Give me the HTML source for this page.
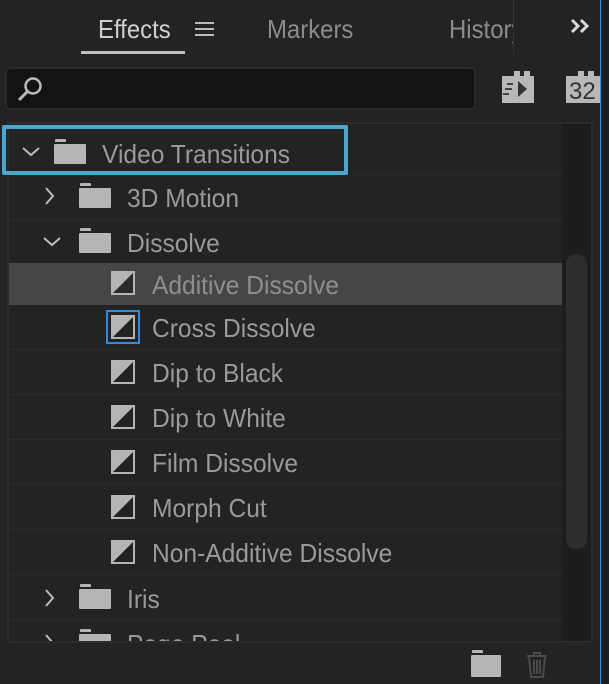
<!DOCTYPE html>
<html><head><meta charset="utf-8"><style>
*{margin:0;padding:0;box-sizing:border-box}
body{width:609px;height:684px;background:#232323;position:relative;overflow:hidden;font-family:"Liberation Sans",sans-serif}
.a{position:absolute}
.tab{position:absolute;top:14px;font-size:26px;color:#8c8c8c;transform:scaleX(.92);transform-origin:left}
.row{position:absolute;left:9px;width:553px;height:45px;border-bottom:1px solid #2b2b2b}
.lbl{position:absolute;font-size:26px;color:#9a9a9a;top:8px;transform:scaleX(.945);transform-origin:left}
.fold{position:absolute;width:32px;height:20px;background:#b5b5b5;border-radius:1px}
.fold:before{content:"";position:absolute;left:1px;top:-5px;width:11px;height:3px;background:#b5b5b5;border-radius:1px 1px 0 0}
.tr{position:absolute;left:101px;top:9px;width:26px;height:26px}
</style></head><body>
<div class="tab" style="left:98px;color:#cfcfcf">Effects</div>
<div class="a" style="left:195px;top:22px;width:19px;height:2px;background:#bbb;box-shadow:0 6px 0 #bbb,0 12px 0 #bbb"></div>
<div class="a" style="left:81px;top:51px;width:104px;height:3px;background:#c0c0c0"></div>
<div class="tab" style="left:267px">Markers</div>
<div class="a" style="left:449px;top:0;width:64px;height:55px;overflow:hidden"><div class="tab" style="left:0">History</div></div>
<div class="a" style="left:513px;top:0;width:1px;height:55px;background:#333"></div>
<svg class="a" style="left:569px;top:17px" width="24" height="18"><path d="M3 3l6 6-6 6M12 3l6 6-6 6" stroke="#d8d8d8" stroke-width="3" fill="none"/></svg>
<div class="a" style="left:600px;top:0;width:1px;height:684px;background:#2d8ce6"></div>
<div class="a" style="left:601px;top:0;width:8px;height:684px;background:#1e1e1e"></div>
<div class="a" style="left:5px;top:67px;width:471px;height:43px;background:#131313;border:2px solid #2a2a2a;border-radius:5px"></div>
<svg class="a" style="left:15px;top:75px" width="30" height="28"><circle cx="18" cy="11" r="7.5" stroke="#bbb" stroke-width="2.5" fill="none"/><path d="M13 16L4 25" stroke="#bbb" stroke-width="3"/></svg>
<svg class="a" style="left:502px;top:71px" width="36" height="32"><path d="M0 5h12V0h6v5h4V0h6v5h4v27H0z" fill="#b8b8b8"/><path d="M16 10l9 8-9 8z" fill="#333"/><path d="M5 13h6M3 18h7M1 23h6" stroke="#444" stroke-width="2"/></svg>
<svg class="a" style="left:566px;top:71px" width="34" height="32"><path d="M0 5h12V0h6v5h4V0h6v5h6v27H0z" fill="#b8b8b8"/><text x="3" y="28" font-family="Liberation Sans" font-size="24" fill="#333">32</text></svg>
<div class="a" style="left:7px;top:122px;width:586px;height:521px;border:2px solid #2c2c2c"></div>
<div class="a" style="left:562px;top:124px;width:29px;height:517px;background:#1d1d1d"></div>
<div class="a" style="left:566px;top:254px;width:21px;height:295px;background:#2e2e2e;border-radius:10px"></div>
<div class="a" style="left:9px;top:124px;width:553px;height:517px;overflow:hidden">
<div class="row" style="left:0;top:6px"><svg class="a" style="left:12px;top:16px" width="20" height="12"><path d="M2 2l8 7 8-7" stroke="#bbb" stroke-width="2" fill="none"/></svg><div class="fold" style="left:45px;top:14px"></div><div class="lbl" style="left:93px;top:9px">Video Transitions</div></div>
<div class="row" style="left:0;top:51px"><svg class="a" style="left:35px;top:11px" width="12" height="20"><path d="M2 2l7 8-7 8" stroke="#bbb" stroke-width="2" fill="none"/></svg><div class="fold" style="left:70px;top:13px"></div><div class="lbl" style="left:118px">3D Motion</div></div>
<div class="row" style="left:0;top:96px"><svg class="a" style="left:33px;top:16px" width="20" height="12"><path d="M2 2l8 7 8-7" stroke="#bbb" stroke-width="2" fill="none"/></svg><div class="fold" style="left:70px;top:13px"></div><div class="lbl" style="left:118px">Dissolve</div></div>
<div class="row" style="left:0;top:139px;height:42px;background:#464646;border:none"><svg class="tr" style="top:7px"><rect x="1" y="1" width="24" height="24" fill="#b5b5b5"/><path d="M3 23L23 3V23z" fill="#2a2a2a"/></svg><div class="lbl" style="left:143px;top:7px;color:#8f8f8f">Additive Dissolve</div></div>
<div class="row" style="left:0;top:181px"><div class="a" style="left:97px;top:5px;width:34px;height:34px;border:2px solid #2d8ce6"></div><svg class="tr"><rect x="1" y="1" width="24" height="24" fill="#b5b5b5"/><path d="M3 23L23 3V23z" fill="#222"/></svg><div class="lbl" style="left:143px">Cross Dissolve</div></div>
<div class="row" style="left:0;top:226px"><svg class="tr"><rect x="1" y="1" width="24" height="24" fill="#b5b5b5"/><path d="M3 23L23 3V23z" fill="#222"/></svg><div class="lbl" style="left:143px">Dip to Black</div></div>
<div class="row" style="left:0;top:271px"><svg class="tr"><rect x="1" y="1" width="24" height="24" fill="#b5b5b5"/><path d="M3 23L23 3V23z" fill="#222"/></svg><div class="lbl" style="left:143px">Dip to White</div></div>
<div class="row" style="left:0;top:316px"><svg class="tr"><rect x="1" y="1" width="24" height="24" fill="#b5b5b5"/><path d="M3 23L23 3V23z" fill="#222"/></svg><div class="lbl" style="left:143px">Film Dissolve</div></div>
<div class="row" style="left:0;top:361px"><svg class="tr"><rect x="1" y="1" width="24" height="24" fill="#b5b5b5"/><path d="M3 23L23 3V23z" fill="#222"/></svg><div class="lbl" style="left:143px">Morph Cut</div></div>
<div class="row" style="left:0;top:406px"><svg class="tr"><rect x="1" y="1" width="24" height="24" fill="#b5b5b5"/><path d="M3 23L23 3V23z" fill="#222"/></svg><div class="lbl" style="left:143px">Non-Additive Dissolve</div></div>
<div class="row" style="left:0;top:451px"><svg class="a" style="left:35px;top:13px" width="12" height="20"><path d="M2 2l7 8-7 8" stroke="#bbb" stroke-width="2" fill="none"/></svg><div class="fold" style="left:70px;top:14px"></div><div class="lbl" style="left:118px;top:9px">Iris</div></div>
<div class="row" style="left:0;top:496px"><svg class="a" style="left:35px;top:13px" width="12" height="20"><path d="M2 2l7 8-7 8" stroke="#bbb" stroke-width="2" fill="none"/></svg><div class="fold" style="left:70px;top:14px"></div><div class="lbl" style="left:118px;top:9px">Page Peel</div></div>
</div>
<div class="fold" style="left:471px;top:655px;width:30px;height:22px"></div>
<svg class="a" style="left:526px;top:651px" width="24" height="28"><path d="M1 5h20M8 5V2h6v3M3 6l2 20h12l2-20M8 9v14M11 9v14M14 9v14" stroke="#4a4a4a" stroke-width="2" fill="none"/></svg>
<div class="a" style="left:2px;top:125px;width:346px;height:50px;border:4px solid #4aa8d0;border-radius:2px"></div>
</body></html>
